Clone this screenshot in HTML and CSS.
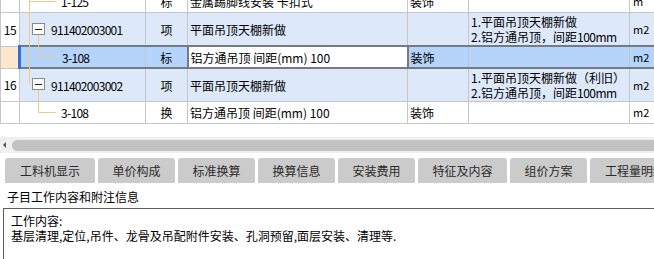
FILE: index.html
```html
<!DOCTYPE html>
<html>
<head>
<meta charset="utf-8">
<link rel="stylesheet" href="styles.css">
</head>
<body>
<div class="gridwrap">
  <table class="tbl">
    <colgroup>
      <col class="c1"><col class="c2"><col class="c3"><col class="c4"><col class="c5"><col class="c6"><col class="c7">
    </colgroup>
    <tr class="single">
      <td class="num"></td><td class="code sub">1-125</td><td class="typ">标</td><td class="name">金属踢脚线安装 卡扣式</td><td class="spec">装饰</td><td class="feat"></td><td class="unit">m</td>
    </tr>
    <tr class="parent">
      <td class="num">15</td><td class="code">911402003001</td><td class="typ">项</td><td class="name">平面吊顶天棚新做</td><td class="spec"></td><td class="feat">1.平面吊顶天棚新做<br>2.铝方通吊顶，间距<span class="asc">100mm</span></td><td class="unit">m2</td>
    </tr>
    <tr class="single sel">
      <td class="num"></td><td class="code sub">3-108</td><td class="typ">标</td><td class="name edit">铝方通吊顶 间距(mm) 100</td><td class="spec">装饰</td><td class="feat"></td><td class="unit">m2</td>
    </tr>
    <tr class="parent">
      <td class="num">16</td><td class="code">911402003002</td><td class="typ">项</td><td class="name">平面吊顶天棚新做</td><td class="spec"></td><td class="feat">1.平面吊顶天棚新做（利旧）<br>2.铝方通吊顶，间距<span class="asc">100mm</span></td><td class="unit">m2</td>
    </tr>
    <tr class="single">
      <td class="num"></td><td class="code sub">3-108</td><td class="typ">换</td><td class="name">铝方通吊顶 间距(mm) 100</td><td class="spec">装饰</td><td class="feat"></td><td class="unit">m2</td>
    </tr>
  </table>
  <svg class="tree" width="60" height="124" viewBox="0 0 60 124">
    <g stroke="#f3c88c" stroke-width="1" fill="none">
      <line x1="29.5" y1="0" x2="29.5" y2="84"/>
      <line x1="29.5" y1="1.5" x2="56" y2="1.5"/>
      <line x1="38.5" y1="35" x2="38.5" y2="56.5"/>
      <line x1="38.5" y1="56.5" x2="56" y2="56.5"/>
      <line x1="38.5" y1="90" x2="38.5" y2="112.5"/>
      <line x1="38.5" y1="112.5" x2="56" y2="112.5"/>
    </g>
    <g stroke="#8a8a8a" stroke-width="1" fill="#fff">
      <rect x="32.5" y="23.5" width="12" height="11"/>
      <rect x="32.5" y="78.5" width="12" height="11"/>
    </g>
    <g stroke="#222" stroke-width="1">
      <line x1="35" y1="29.5" x2="42" y2="29.5"/>
      <line x1="35" y1="84.5" x2="42" y2="84.5"/>
    </g>
  </svg>
</div>
<div class="hscroll">
  <span class="arrow"></span>
  <div class="thumb"></div>
</div>
<div class="tabs">
  <div class="tab w90">工料机显示</div>
  <div class="tab">单价构成</div>
  <div class="tab">标准换算</div>
  <div class="tab">换算信息</div>
  <div class="tab">安装费用</div>
  <div class="tab w89">特征及内容</div>
  <div class="tab">组价方案</div>
  <div class="tab w90">工程量明细</div>
</div>
<div class="info-title">子目工作内容和附注信息</div>
<div class="info-box">
  <div>工作内容:</div>
  <div>基层清理,定位,吊件、龙骨及吊配附件安装、孔洞预留,面层安装、清理等.</div>
</div>
</body>
</html>
```
FILE: styles.css
```css
html, body {
  margin: 0;
  padding: 0;
  overflow: hidden;
  background: #fff;
  width: 654px;
  height: 259px;
}
body {
  font-family: "Noto Sans CJK SC", "Liberation Sans", sans-serif;
  font-size: 12px;
  color: #000;
}
.gridwrap {
  position: relative;
  height: 124px;
  overflow: hidden;
  width: 700px;
}
.tbl {
  border-collapse: collapse;
  table-layout: fixed;
  width: 690px;
  margin-top: -10px;
}
.c1 { width: 19px; }
.c2 { width: 126px; }
.c3 { width: 42px; }
.c4 { width: 220px; }
.c5 { width: 61px; }
.c6 { width: 161px; }
.c7 { width: 61px; }
.tbl td {
  border: 1px solid #c3c6cb;
  padding: 0 2px;
  white-space: nowrap;
  overflow: hidden;
  line-height: 15px;
  vertical-align: middle;
}
.single td { height: 21px; }
.parent td { height: 32px; background: #dde8f9; }
.parent td.num { background: #fff; }
.tbl td.num { text-align: center; padding: 0; letter-spacing: -0.5px; }
.tbl td.code { padding-left: 31px; letter-spacing: -0.7px; }
.tbl td.code.sub { padding-left: 41px; }
.tbl td.typ { text-align: center; }
.tbl td.name { padding-left: 2px; }
.tbl td.spec { padding-left: 2px; }
.tbl td.feat { padding-left: 2px; }
.asc { letter-spacing: -0.5px; }
.tbl td.unit { padding-left: 3px; font-size: 11px; }
.sel td {
  background: #b5d4fb;
  border-top: 2px solid #767b82;
  border-bottom: 2px solid #767b82;
  height: 20px;
}
.sel td.num {
  background: #fde6c9;
  border-top: 1px solid #c3c6cb;
  border-bottom: 1px solid #c3c6cb;
  border-right: 3px solid #2f6fd8;
}
.sel td.edit {
  background: #fff;
  border-left: 2px solid #767b82;
  border-right: 2px solid #767b82;
}
.tree {
  position: absolute;
  left: 0;
  top: 0;
}
.hscroll {
  margin-top: 13px;
  height: 16px;
  background: #efefef;
  display: flex;
  align-items: center;
  gap: 4px;
  padding-left: 3px;
  width: 700px;
}
.arrow {
  width: 0;
  height: 0;
  border-top: 3px solid transparent;
  border-bottom: 3px solid transparent;
  border-right: 3px solid #555;
}
.thumb {
  height: 11px;
  flex: 1;
  background: #c2c2c2;
  border-radius: 6px;
  margin-left: 2px;
}
.tabs {
  display: flex;
  gap: 3px;
  padding-left: 5px;
  margin-top: 5px;
  width: 760px;
}
.tab {
  width: 77px;
  height: 25px;
  flex: none;
  background: #cbcbcb;
  border-radius: 3px 3px 0 0;
  color: #2a2a2a;
  font-size: 12px;
  line-height: 25px;
  text-align: center;
}
.tab.w90 { width: 90px; }
.tab.w89 { width: 89px; }
.info-title {
  height: 22px;
  line-height: 22px;
  padding: 3px 0 0 7px;
  font-size: 12px;
}
.info-box {
  margin-left: 3px;
  width: 700px;
  height: 80px;
  border: 1px solid #5d5d5d;
  padding: 4px 7px;
  line-height: 15px;
  font-size: 12px;
}
```
